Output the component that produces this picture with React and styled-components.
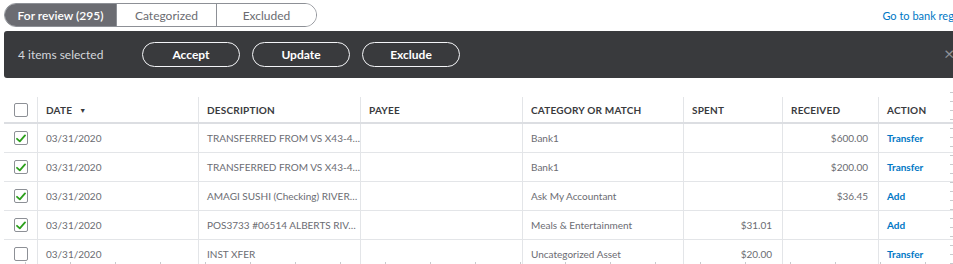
import React from "react";
import styled, { createGlobalStyle } from "styled-components";

const Global = createGlobalStyle`
  html, body { margin: 0; padding: 0; background: #fff; overflow: hidden; }
  body { font-family: Lato, "Open Sans", sans-serif; }
`;

const Page = styled.div`
  width: 990px;
  padding: 3px 0 0 4px;
  box-sizing: border-box;
  position: relative;
  height: 264px;
`;

const TopRow = styled.div`
  display: flex;
  align-items: center;
  height: 24px;
`;

const Tabs = styled.div`
  display: flex;
  height: 24px;
  border: 1px solid #8d9096;
  border-radius: 13px;
  overflow: hidden;
  box-sizing: border-box;
`;

const Tab = styled.div`
  width: ${(p) => p.$w}px;
  display: flex;
  align-items: center;
  justify-content: center;
  font-size: 12px;
  color: ${(p) => (p.$active ? "#fff" : "#6b6c72")};
  background: ${(p) => (p.$active ? "#6b6c72" : "#fff")};
  font-weight: ${(p) => (p.$active ? 600 : 400)};
  border-left: ${(p) => (p.$first ? "none" : "1px solid #8d9096")};
`;

const BankLink = styled.a`
  margin-left: auto;
  margin-right: 15px;
  font-size: 11px;
  color: #0077c5;
  text-decoration: none;
  white-space: nowrap;
`;

const Bar = styled.div`
  margin-top: 4px;
  height: 47px;
  background: #393a3d;
  border-radius: 3px;
  display: flex;
  align-items: center;
  padding-left: 14px;
  position: relative;
`;

const Selected = styled.span`
  color: #d4d7dc;
  font-size: 12px;
  width: 124px;
`;

const Actions = styled.div`
  display: flex;
  gap: 12px;
`;

const PillButton = styled.button`
  width: 98px;
  height: 25px;
  border: 1.5px solid #f4f5f8;
  border-radius: 13px;
  background: transparent;
  color: #fff;
  font-family: inherit;
  font-weight: 700;
  font-size: 12px;
  padding: 0;
`;

const Close = styled.span`
  position: absolute;
  left: 940px;
  top: 12px;
  color: #8d9096;
  font-size: 18px;
  line-height: 20px;
`;

const Table = styled.div`
  margin-top: 19px;
`;

const cols = "33px 161px 162px 162px 161px 99px 96px 90px";

const HeadRow = styled.div`
  display: grid;
  grid-template-columns: ${cols};
  height: 25px;
  border-bottom: 2px solid #dcdee2;
`;

const Row = styled.div`
  display: grid;
  grid-template-columns: ${cols};
  height: 28px;
  border-bottom: 1px solid #e3e5e8;
`;

const Cell = styled.div`
  display: flex;
  align-items: center;
  padding: 0 ${(p) => (p.$right ? "10px" : "9px")} 0 8px;
  justify-content: ${(p) => (p.$right ? "flex-end" : p.$center ? "center" : "flex-start")};
  border-left: ${(p) => (p.$first ? "none" : "1px solid #e3e5e8")};
  font-size: 10px;
  color: #6b6c72;
  white-space: nowrap;
  overflow: hidden;
  ${(p) => p.$center && "padding: 0;"}
`;

const HeadCell = styled(Cell)`
  font-weight: 700;
  color: #393a3d;
  font-size: 10px;
  letter-spacing: 0.2px;
`;

const SortArrow = styled.span`
  font-size: 7px;
  margin-left: 7px;
`;

const Link = styled.span`
  color: #0077c5;
  font-weight: 700;
`;

const Box = styled.span`
  width: 12px;
  height: 12px;
  border: 1px solid #8d9096;
  border-radius: 2px;
  display: flex;
  align-items: center;
  justify-content: center;
  background: #fff;
`;

const Check = ({ checked }) => (
  <Box>
    {checked && (
      <svg width="10" height="9" viewBox="0 0 10 9">
        <path d="M1 4.8 L3.8 7.4 L9 1.4" fill="none" stroke="#2ca01c" strokeWidth="1.8" strokeLinecap="round" strokeLinejoin="round" />
      </svg>
    )}
  </Box>
);

const BottomTicks = styled.div`
  position: absolute;
  left: 0;
  right: 0;
  top: 262px;
  height: 2px;
  background: repeating-linear-gradient(90deg, transparent 0 25px, #c8cacd 25px 26px, transparent 26px 45px);
`;

const SideTicks = styled.div`
  position: absolute;
  left: 950px;
  top: 92px;
  width: 3px;
  height: 172px;
  background: repeating-linear-gradient(180deg, #c8cacd 0 1px, transparent 1px 9px);
`;

const rows = [
  { c: true, d: "TRANSFERRED FROM VS X43-4…", cat: "Bank1", spent: "", rec: "$600.00", act: "Transfer" },
  { c: true, d: "TRANSFERRED FROM VS X43-4…", cat: "Bank1", spent: "", rec: "$200.00", act: "Transfer" },
  { c: true, d: "AMAGI SUSHI (Checking) RIVER…", cat: "Ask My Accountant", spent: "", rec: "$36.45", act: "Add" },
  { c: true, d: "POS3733 #06514 ALBERTS RIV…", cat: "Meals & Entertainment", spent: "$31.01", rec: "", act: "Add" },
  { c: false, d: "INST XFER", cat: "Uncategorized Asset", spent: "$20.00", rec: "", act: "Transfer" },
];

export default function App() {
  return (
    <>
      <Global />
      <Page>
        <TopRow>
          <Tabs>
            <Tab $w={111} $active $first>For review (295)</Tab>
            <Tab $w={99}>Categorized</Tab>
            <Tab $w={99}>Excluded</Tab>
          </Tabs>
          <BankLink href="#">Go to bank register</BankLink>
        </TopRow>
        <Bar>
          <Selected>4 items selected</Selected>
          <Actions>
            <PillButton>Accept</PillButton>
            <PillButton>Update</PillButton>
            <PillButton>Exclude</PillButton>
          </Actions>
          <Close>×</Close>
        </Bar>
        <Table>
          <HeadRow>
            <HeadCell $first $center><Check /></HeadCell>
            <HeadCell>DATE<SortArrow>▼</SortArrow></HeadCell>
            <HeadCell>DESCRIPTION</HeadCell>
            <HeadCell>PAYEE</HeadCell>
            <HeadCell>CATEGORY OR MATCH</HeadCell>
            <HeadCell>SPENT</HeadCell>
            <HeadCell>RECEIVED</HeadCell>
            <HeadCell>ACTION</HeadCell>
          </HeadRow>
          {rows.map((r, i) => (
            <Row key={i}>
              <Cell $first $center><Check checked={r.c} /></Cell>
              <Cell>03/31/2020</Cell>
              <Cell>{r.d}</Cell>
              <Cell></Cell>
              <Cell>{r.cat}</Cell>
              <Cell $right>{r.spent}</Cell>
              <Cell $right>{r.rec}</Cell>
              <Cell><Link>{r.act}</Link></Cell>
            </Row>
          ))}
        </Table>
        <BottomTicks />
        <SideTicks />
      </Page>
    </>
  );
}
